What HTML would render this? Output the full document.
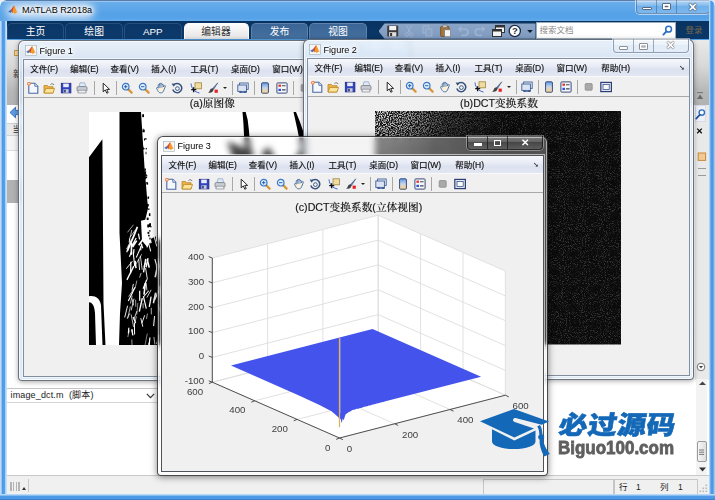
<!DOCTYPE html>
<html lang="zh"><head><meta charset="utf-8"><title>MATLAB R2018a</title>
<style>
*{box-sizing:border-box;margin:0;padding:0}
html,body{width:715px;height:500px;overflow:hidden}
body{position:relative;font-family:"Liberation Sans","Noto Sans CJK SC",sans-serif;font-size:9px;color:#111;
 background:#55a2e8}
i,em,u,b{font-style:normal;font-weight:normal;text-decoration:none}
.abs{position:absolute}
/* main frame */
#frameL{position:absolute;left:0;top:21px;width:6.5px;height:479px;background:linear-gradient(90deg,#c4def7 0,#b4d6f6 1.2px,#4f9ae8 2.2px,#55a0ea 4.6px,#a9cff4 5.4px,#c9e1f8 6.5px)}
#frameR{position:absolute;left:709px;top:0;width:6px;height:500px;background:linear-gradient(90deg,#b9daf8 0,#a6cff5 1px,#4f9ae8 1.8px,#4a98e8 4.2px,#a0ccf4 5px,#9cc6ee 6px)}
#frameB{position:absolute;left:0;top:493.5px;width:715px;height:6.5px;background:linear-gradient(180deg,#c4def7 0,#a9d0f5 1.2px,#4f9ae8 2px,#4a98e8 4.8px,#3a7cc8 5.6px,#2f68b0 6.5px)}
#ttl{position:absolute;left:22px;top:4px;font-size:9.1px;line-height:12px;color:#000;white-space:nowrap;text-shadow:0 0 5px #fff,0 0 5px #fff,0 0 3px #fff}
#topedge{position:absolute;left:0;top:0;width:715px;height:2.4px;background:linear-gradient(180deg,#4a6c98 0,#5f88b8 40%,#9cc6ee 75%,rgba(140,190,240,0))}
#tblur{position:absolute;left:6px;top:2.5px;width:88px;height:16px;border-radius:8px;background:#d3e3f4;filter:blur(4.5px)}
#cornL{position:absolute;left:0;top:0;width:6px;height:6px;background:radial-gradient(circle at 6px 6px,rgba(255,255,255,0) 5.2px,#e6eef6 6px)}
#cornR{position:absolute;right:0;top:0;width:6px;height:6px;background:radial-gradient(circle at 0 6px,rgba(255,255,255,0) 5.2px,#d5e6f6 6px)}
#tglow{position:absolute;left:0;top:2px;width:715px;height:20px;background:linear-gradient(180deg,rgba(255,255,255,.12),rgba(255,255,255,.03) 45%,rgba(255,255,255,0) 55%,rgba(255,255,255,0) 80%,rgba(255,255,255,.12))}
.mlogo{position:absolute}
/* main window buttons */
#mwb{position:absolute;left:635.5px;top:-1px;width:74px;height:14.5px;border:1px solid rgba(60,90,130,.55);border-top:0;border-radius:0 0 4px 4px;background:linear-gradient(180deg,rgba(255,255,255,.55),rgba(255,255,255,.25) 45%,rgba(160,200,240,.2) 50%,rgba(200,225,250,.35));box-shadow:0 0 0 1px rgba(255,255,255,.55)}
#mwb i{position:absolute;top:0;height:13.5px;border-right:1px solid rgba(60,90,130,.5)}
#mwb u{position:absolute;background:#fff;border:1px solid #5a6a80;border-radius:1px}
#mwb b{position:absolute;left:40px;top:1.5px;width:32px;text-align:center;font-size:10.5px;line-height:12px;font-weight:bold;color:#fff;text-shadow:0 0 1px #456,0 0 1px #456,0 0 1px #456,0 0 1.5px #456}
/* tab strip */
#tabs{position:absolute;left:6.5px;top:21.3px;width:702.5px;height:18.2px;background:linear-gradient(180deg,#083260,#0b3869)}
.tab{position:absolute;top:2.2px;height:16px;width:57.5px;border-radius:5px 5px 0 0;color:#fff;font-size:9.8px;line-height:16px;text-align:center;border:1px solid #27507f;border-bottom:0;background:linear-gradient(180deg,#0a3666,#0d3b6d)}
.tab.lt{background:linear-gradient(180deg,#3a6596,#44709f);border-color:#5d82ad}
.tab.sel{background:linear-gradient(180deg,#fdfdfd,#e4e4e4);color:#333;border-color:#fff}
#qat{position:absolute;left:372px;top:2.2px;width:157px;height:15.3px;background:linear-gradient(180deg,#8ba5c7,#7f9bc0);clip-path:polygon(6px 0,100% 0,100% 100%,6px 100%,0 50%)}
#srch{position:absolute;left:529px;top:.7px;width:140.5px;height:16.8px;background:#fff;border:1px solid #9ab;font-size:8.5px;line-height:15px;color:#8a8a8a;padding-left:3px}
#login{position:absolute;left:679px;top:3px;font-size:8.5px;line-height:13px;color:#7a6748}
/* toolstrip & below */
#tstrip{position:absolute;left:6.5px;top:39.5px;width:702.5px;height:65px;background:linear-gradient(180deg,#eaeaea,#d8d8d8 40%,#b6b6b6 80%,#b2b2b2)}
#below{position:absolute;left:6.5px;top:104.5px;width:702.5px;height:389px;background:#fff}
/* figure windows */
.fw{position:absolute;width:391px;height:340.5px;border-radius:6px 6px 4px 4px;border:1px solid rgba(60,66,76,.72);
 background:linear-gradient(180deg,rgba(232,242,253,.82) 0,rgba(214,230,248,.8) 20px,rgba(208,226,246,.72) 100%);
 -webkit-backdrop-filter:blur(2.5px);backdrop-filter:blur(2.5px);
 box-shadow:inset 0 0 0 1px rgba(255,255,255,.75),0 1px 5px rgba(0,0,0,.35)}
.fw.f3{-webkit-backdrop-filter:blur(3px);backdrop-filter:blur(3px);background:linear-gradient(180deg,rgba(255,255,255,.27),rgba(255,255,255,.2));border-color:rgba(30,30,30,.8);box-shadow:inset 0 0 0 1px rgba(255,255,255,.5),0 1px 7px rgba(0,0,0,.5)}
.fwt{position:absolute;left:0;top:0;width:100%;height:20px}
.fwt .mlogo{left:4.8px;top:4px;width:12px;height:11px}
.fwt b{position:absolute;left:19.5px;top:3.5px;font-size:9.1px;line-height:12px;white-space:nowrap;color:#000;text-shadow:0 0 4px #fff,0 0 4px #fff,0 0 3px #fff,0 0 6px #fff}
.wb{position:absolute;right:4.5px;top:-1px;width:76px;height:14px;border:1px solid rgba(110,130,160,.75);border-top:0;border-radius:0 0 4px 4px;
 background:linear-gradient(180deg,rgba(255,255,255,.6),rgba(255,255,255,.3) 45%,rgba(220,232,245,.2) 50%,rgba(235,242,250,.4));box-shadow:0 0 0 1px rgba(255,255,255,.5)}
.wb i{position:absolute;top:0;height:13px;color:#fff}
.wb .b1{left:0;width:20px;border-right:1px solid rgba(110,130,160,.65)}
.wb .b2{left:20px;width:20px;border-right:1px solid rgba(110,130,160,.65)}
.wb .b3{left:40px;width:34px;font-size:10.5px;line-height:13px;text-align:center;font-weight:bold;color:#fff;text-shadow:0 0 1px #777,0 0 1px #777,0 0 1px #777,0 0 1.5px #888}
.wb .b1 u{position:absolute;left:5.5px;top:7px;width:9px;height:3.6px;background:#fff;border:1px solid #8a8f98;border-radius:1px}
.wb .b2 u{position:absolute;left:5px;top:3.5px;width:9px;height:7px;border:1px solid #8a8f98;background:#dfeaf6;box-shadow:inset 0 0 0 1.4px #fff,inset 0 0 0 2.3px #8a8f98;border-radius:1px}
.f3 .wb{border-color:rgba(20,20,20,.8);background:linear-gradient(180deg,rgba(255,255,255,.28),rgba(255,255,255,.1) 45%,rgba(0,0,0,.12) 50%,rgba(255,255,255,.08));box-shadow:0 0 0 1px rgba(255,255,255,.35)}
.f3 .wb .b1,.f3 .wb .b2{border-right-color:rgba(20,20,20,.7)}
.fin{position:absolute;left:3.2px;top:18px;width:382.8px;height:317.5px;border:1px solid rgba(110,124,142,.85);background:#f0f0f0;box-shadow:0 0 0 1px rgba(255,255,255,.6)}
.mb{position:absolute;left:0;top:0;width:100%;height:18px;background:linear-gradient(180deg,#f7f8fc,#e9ecf6 40%,#dde2f0 60%,#e2e6f2);font-size:8.5px;line-height:18px;white-space:nowrap;border-bottom:1px solid #f8f9fc}
.mb span{position:absolute;top:0;color:#0c0c0c;-webkit-text-stroke:.18px #222}
.mb em{position:absolute;right:4px;top:0;font-size:7px;color:#111}
.tb{position:absolute;left:0;top:18px;width:100%;height:19.5px;background:#f0f0f0;border-bottom:1px solid #a9a9a9}
.tb .ic{position:absolute;margin-left:-5.5px;margin-top:-38px}
.tb .sep{position:absolute;top:3px;height:14px;width:1px;background:#a8a8a8;margin-left:-5.5px}
.tb .dd{position:absolute;top:9px;margin-left:-5.5px;border:2px solid transparent;border-top:2.5px solid #222;width:0;height:0}
.cv{position:absolute;left:0;top:37.5px;width:380.8px;height:278px;background:#f0f0f0;overflow:hidden}
.cv .img{position:absolute}
.pt{position:absolute;text-align:center;font-family:"Liberation Sans","Noto Serif CJK SC",serif;font-size:10.7px;line-height:13px;color:#161616;font-weight:500;-webkit-text-stroke:.15px #222}
/* bottom stuff */
#ddl{position:absolute;left:6.5px;top:388px;width:150px;height:15px;background:#fff;border-top:1px solid #c4c4c4;border-bottom:1px solid #d4d4d4;font-size:9px;line-height:13px;padding-left:4px;color:#222;white-space:nowrap;letter-spacing:.15px}
#ddl svg{position:absolute;left:139.5px;top:4px}
#status{position:absolute;left:6.5px;top:475.3px;width:702.5px;height:18.5px;background:#f0f0f0;border-top:1px solid #c9c9c9;font-size:8.5px;color:#222}
#status .fld{position:absolute;top:3px;height:15px;border:1px solid #c6c6c6;border-bottom:0;background:#f0f0f0}
#grip{position:absolute;left:3px;top:5.5px;width:11px;height:9.5px;background:repeating-linear-gradient(90deg,#b4b4b4 0,#b4b4b4 1.5px,#f0f0f0 1.5px,#f0f0f0 2.8px)}
#vsb{position:absolute;left:696px;top:379px;width:11px;height:96px;background:#f3f3f3}
#vsb .th{position:absolute;left:.5px;top:62px;width:10px;height:21px;border:1px solid #9a9a9a;border-radius:2px;background:linear-gradient(90deg,#f6f6f6,#dedede)}
#rside{position:absolute;left:694.5px;top:104.5px;width:14.5px;height:275px;background:#e9e9e9}
#wm{position:absolute;left:556px;top:408px;white-space:nowrap}
#wm .cn{position:absolute;left:.5px;top:2.5px;font-family:"Liberation Sans","Noto Sans CJK SC",sans-serif;font-weight:900;font-size:25.5px;line-height:28px;color:#1468b8;transform:skewX(-8deg) scaleX(1.13);transform-origin:0 100%;letter-spacing:.4px;-webkit-text-stroke:.6px #1468b8}
#wm .en{position:absolute;left:1.5px;top:30.5px;font-family:"Liberation Sans",sans-serif;font-weight:bold;font-size:18px;line-height:18px;color:#5f5f5f;letter-spacing:0;-webkit-text-stroke:.8px #5f5f5f;transform:scaleX(.943);transform-origin:0 0}

.f3 .wb .b1 u{border:0;background:#fff;left:6.5px;top:7.8px;width:8px;height:2.4px;border-radius:0}
.f3 .wb .b2 u{border:1.5px solid #fff;background:transparent;box-shadow:none;left:6px;top:4.5px;width:7.5px;height:5.5px;border-radius:0}
.f3 .wb .b3{font-size:9.5px;line-height:13.500px;text-shadow:none}

.f1{width:392px}
.f1 .fin{left:4px}
.f1 .fwt .mlogo{left:5.6px}
.f1 .fwt b{left:20.5px}
.f3 .fin{border-color:rgba(60,64,72,.9)}

</style></head>
<body>
<div id="tglow"></div><div id="tblur"></div><div id="topedge"></div><div id="cornL"></div>
<div style="position:absolute;left:7px;top:3.5px;width:12px;height:12px"><svg class="mlogo" width="12" height="12" viewBox="0 0 12 12" preserveAspectRatio="none"><path d="M1.2 7.4l2.6-1.6 1.4 1.2-1.8 1.9z" fill="#3d6fc0"/><path d="M3.8 5.8c1.4-1.3 2.2-3.4 3.4-4.4l1.2 5.4-3.2 2.2z" fill="#d8442a"/><path d="M7.2 1.4c1.2 1.6 2.2 5.6 3.6 7.4-1.4-.6-2-.2-2.8 1.4-.8-1-1.6-2-2.8-1.6z" fill="#f29a2e"/></svg></div>
<div id="ttl">MATLAB R2018a</div>
<div id="mwb"><i style="left:0;width:20px"></i><i style="left:20px;width:20px"></i><u style="left:5.5px;top:7.5px;width:9.5px;height:3.6px"></u><u style="left:25px;top:3.5px;width:9.5px;height:7.6px;box-shadow:inset 0 0 0 1.7px #fff,inset 0 0 0 2.7px #5a6a80"></u><b>✕</b></div>
<div id="tabs">
<div class="tab" style="left:0.3px">主页</div><div class="tab" style="left:58.9px">绘图</div><div class="tab" style="left:117.6px">APP</div>
<div class="tab sel" style="left:177px;width:65px">编辑器</div><div class="tab lt" style="left:244.3px">发布</div><div class="tab lt" style="left:302.7px">视图</div>
<div id="qat"></div>
<svg style="position:absolute;left:378.5px;top:2.5px" width="152" height="15" viewBox="0 0 152 15">
<g transform="translate(7.7,7)"><rect x="-5.5" y="-5.5" width="11" height="11" rx="1" fill="#3c3c3c"/><rect x="-3.5" y="-5" width="7" height="4.2" fill="#f2f2f2"/><rect x="-3.6" y="1.2" width="7.2" height="4.3" fill="#e0e0e0"/><rect x="-2.6" y="2" width="2" height="3" fill="#333"/></g>
<g transform="translate(24,7)" stroke="#9db3d2" fill="none" stroke-width="1"><path d="M2.5 -5.5L-1.5 2M-2.5 -5.5L1.5 2"/><circle cx="-2.3" cy="3.6" r="1.7"/><circle cx="2.3" cy="3.6" r="1.7"/></g>
<g transform="translate(42.4,7)" stroke="#9db3d2" fill="#8aa3c6" stroke-width="1"><rect x="-4.5" y="-5" width="6" height="7"/><rect x="-1.5" y="-2" width="6" height="7"/></g>
<g transform="translate(60.6,7)"><rect x="-5" y="-4.5" width="8.5" height="10" rx="1" fill="#a5743a" stroke="#6e4c22" stroke-width=".8"/><rect x="-3" y="-6" width="4.5" height="2.6" rx=".8" fill="#c9c9c9" stroke="#666" stroke-width=".6"/><rect x="-1" y="-1.2" width="6" height="7" fill="#f4f4f4" stroke="#777" stroke-width=".7"/></g>
<g transform="translate(78.2,7)" stroke="#9db3d2" fill="none" stroke-width="1.7"><path d="M-3.5 -2H1.5a3.2 3.2 0 0 1 0 6.4H-2"/><path d="M-1.8 -5.2L-5.4 -2l3.6 3.2z" fill="#9db3d2" stroke="none"/></g>
<g transform="translate(95,7)" stroke="#9db3d2" fill="none" stroke-width="1.7"><path d="M3.5 -2H-1.5a3.2 3.2 0 0 0 0 6.4H2"/><path d="M1.8 -5.2L5.4 -2l-3.6 3.2z" fill="#9db3d2" stroke="none"/></g>
<g transform="translate(113.5,7)"><rect x="-3" y="-5.5" width="9" height="7" fill="#f4f4f4" stroke="#333" stroke-width="1"/><rect x="-3" y="-5.5" width="9" height="2" fill="#333"/><rect x="-6" y="-1.5" width="9" height="7" fill="#f4f4f4" stroke="#333" stroke-width="1"/><rect x="-6" y="-1.5" width="9" height="2" fill="#333"/></g>
<g transform="translate(129.8,7)"><circle r="5.6" fill="#fff" stroke="#1c2c44" stroke-width="1.3"/><text x="0" y="3.3" font-family="Liberation Sans,sans-serif" font-weight="bold" font-size="9.5" text-anchor="middle" fill="#1c2c44">?</text></g>
<path d="M142.2 6l2.8 3 2.8-3z" fill="#0c1a30"/>
</svg>
<div id="srch">搜索文档<svg style="position:absolute;right:2px;top:2px" width="11" height="11" viewBox="0 0 11 11"><circle cx="6.6" cy="4.2" r="2.9" fill="#fff" stroke="#2a6fc4" stroke-width="1.5"/><path d="M4.4 6.4L1.4 9.6" stroke="#2a6fc4" stroke-width="1.9" stroke-linecap="round"/></svg></div>
<div id="login">登录</div>
</div>
<div id="tstrip"></div>
<div id="below"></div>
<div style="position:absolute;left:13.5px;top:49.5px;width:6px;height:6px;background:#f4d9a0;border:1px solid #c79a48"></div>
<div style="position:absolute;left:13px;top:69px;font-size:9px;line-height:11px;color:#333">新</div>
<svg style="position:absolute;left:8.5px;top:105.5px" width="13" height="13" viewBox="0 0 13 13"><path d="M1 6.5L6.5 1.200V4.400H12V8.600H6.500V11.800z" fill="#5b9be0" stroke="#2f6bb8" stroke-width=".9" stroke-linejoin="round"/></svg>
<div style="position:absolute;left:6.5px;top:123px;width:14px;height:12.5px;background:#e9e9e9;border-top:1px solid #d0d0d0;border-bottom:1px solid #d0d0d0;font-size:8.5px;line-height:11px;color:#333;padding-left:6px;overflow:hidden;white-space:nowrap">当前</div>
<div style="position:absolute;left:6.5px;top:135.500px;width:14px;height:15.5px;background:#f4f4f4;border-bottom:1px solid #dcdcdc"></div>
<div style="position:absolute;left:6.5px;top:180px;width:14px;height:23px;background:#b2b2b2"></div>
<div id="rside">
<div style="position:absolute;left:0;top:0;width:11.5px;height:17px;background:#eef0fa;border:1px solid #d8dae4"></div>
<svg style="position:absolute;left:0;top:-15px" width="15" height="80" viewBox="0 0 15 80">
<path d="M2.3 2.6h5.6" stroke="#777" stroke-width="1.1"/><path d="M5.1 4.4L2 9h6.2z" fill="#6c6c6c"/>
<circle cx="6.8" cy="22.6" r="2.7" fill="#fff" stroke="#2a6fc4" stroke-width="1.4"/><path d="M4.7 24.9L1.2 28.6" stroke="#1f4f9c" stroke-width="1.7" stroke-linecap="round"/>
<path d="M2.2 38.6l4.6 4.6M6.8 38.6l-4.6 4.6" stroke="#111" stroke-width="1.3"/>
<rect x="3.2" y="63" width="7.4" height="7.4" fill="#f2c894" stroke="#c88a3a" stroke-width="1"/>
</svg>
<div style="position:absolute;left:3px;top:63.5px;width:8px;height:1px;background:#9a9a9a"></div>
<div style="position:absolute;left:3px;top:70.5px;width:8px;height:1px;background:#9a9a9a"></div>
<svg style="position:absolute;left:1px;top:257px" width="10" height="10" viewBox="0 0 10 10"><circle cx="5" cy="5" r="3.8" fill="#fafafa" stroke="#666" stroke-width=".9"/><path d="M3 4l2 2.4L7 4z" fill="#444"/></svg>
</div>
<div id="vsb"><svg style="position:absolute;left:2.5px;top:2px" width="7" height="5" viewBox="0 0 7 5"><path d="M0 4L3.5 .5 7 4z" fill="#444"/></svg><div class="th"><svg style="position:absolute;left:1.5px;top:6.5px" width="6" height="8" viewBox="0 0 6 8"><path d="M0 1h5M0 3.2h5M0 5.4h5" stroke="#777" stroke-width="1"/></svg></div><svg style="position:absolute;left:2.5px;top:87.5px" width="7" height="5" viewBox="0 0 7 5"><path d="M0 .5L3.5 4.5 7 .5z" fill="#333"/></svg></div>
<div id="ddl">image_dct.m&nbsp; (脚本)<svg width="9" height="6" viewBox="0 0 9 6"><path d="M.8 .8L4.5 4.6 8.2 .8" fill="none" stroke="#333" stroke-width="1.2"/></svg></div>
<div id="status"><div id="grip"></div><svg style="position:absolute;left:15.5px;top:10.5px" width="4" height="3" viewBox="0 0 4 3"><path d="M0 3L2 0 4 3z" fill="#333"/></svg><div style="position:absolute;left:21px;top:3px;width:1px;height:13px;background:#c9c9c9"></div>
<div class="fld" style="left:476.5px;width:131px"></div><div class="fld" style="left:607.5px;width:84px"></div>
<span style="position:absolute;left:612.5px;top:5.5px;line-height:11px">行</span><span style="position:absolute;left:629.5px;top:5.5px;line-height:11px">1</span><span style="position:absolute;left:653.5px;top:5.5px;line-height:11px">列</span><span style="position:absolute;left:671.5px;top:5.5px;line-height:11px">1</span>
<svg style="position:absolute;left:692px;top:8px" width="9" height="9" viewBox="0 0 9 9"><g fill="#b9b9b9"><rect x="6.5" y="0.5" width="1.6" height="1.6"/><rect x="6.5" y="3.5" width="1.6" height="1.6"/><rect x="6.5" y="6.5" width="1.6" height="1.6"/><rect x="3.5" y="3.5" width="1.6" height="1.6"/><rect x="3.5" y="6.5" width="1.6" height="1.6"/><rect x=".5" y="6.5" width="1.6" height="1.6"/></g></svg>
</div>
<div id="frameL"></div><div id="frameR"></div><div id="frameB"></div><div id="cornR"></div>
<div class="fw f1" style="left:18px;top:40px">
<div class="fwt"><svg class="mlogo" width="12" height="12" viewBox="0 0 12 12" preserveAspectRatio="none"><rect x=".4" y=".4" width="11.2" height="11.2" fill="#f6f6f6" stroke="#9aa" stroke-width=".6"/><path d="M1.2 7.4l2.6-1.6 1.4 1.2-1.8 1.9z" fill="#3d6fc0"/><path d="M3.8 5.8c1.4-1.3 2.2-3.4 3.4-4.4l1.2 5.4-3.2 2.2z" fill="#d8442a"/><path d="M7.2 1.4c1.2 1.6 2.2 5.6 3.6 7.4-1.4-.6-2-.2-2.8 1.4-.8-1-1.6-2-2.8-1.6z" fill="#f29a2e"/></svg><b>Figure 1</b></div>
<div class="wb"><i class="b1"><u></u></i><i class="b2"><u></u></i><i class="b3">✕</i></div>
<div class="fin">
<div class="mb"><span style="left:6.199999999999999px">文件(F)</span><span style="left:46.3px">编辑(E)</span><span style="left:86.6px">查看(V)</span><span style="left:127.19999999999999px">插入(I)</span><span style="left:166.4px">工具(T)</span><span style="left:207px">桌面(D)</span><span style="left:248.2px">窗口(W)</span><span style="left:293px">帮助(H)</span><em>➘</em></div>
<div class="tb"><svg class="ic" style="left:8.0px;top:42.0px" width="12" height="12" viewBox="0 0 12 12"><path d="M1.8 1.3h6l3 3v7h-9z" fill="#f4f8fd" stroke="#4a68a4" stroke-width="1.1"/><path d="M7.8 1.300v3h3" fill="#d4e0f2" stroke="#4a68a4" stroke-width=".8"/><circle cx="1.9" cy="1.7" r="1.5" fill="#fbe3c0" stroke="#ee6a2a" stroke-width=".9"/></svg><svg class="ic" style="left:24.3px;top:42.0px" width="12" height="12" viewBox="0 0 12 12"><path d="M1 3.5h3.5l1 1.2h4.500v6.300h-9z" fill="#eeb44a" stroke="#b98622" stroke-width=".8"/><path d="M1 11l1.8-4.6h8.8L10 11z" fill="#fbe39a" stroke="#b98622" stroke-width=".8"/><path d="M7.5 2.5c1.5-1.2 3-.8 3.5.6" stroke="#555" fill="none" stroke-width=".8"/></svg><svg class="ic" style="left:41.0px;top:42.0px" width="12" height="12" viewBox="0 0 12 12"><rect x="1.3" y="1.3" width="9.6" height="9.6" fill="#3044c0" stroke="#1c2a80" stroke-width=".8"/><rect x="3.2" y="1.6" width="5.6" height="3.6" fill="#e8ecf8"/><rect x="3.4" y="7.2" width="5.2" height="3.6" fill="#c8cbd8"/><rect x="4.2" y="7.8" width="1.5" height="2.6" fill="#222a70"/></svg><svg class="ic" style="left:57.8px;top:42.0px" width="12" height="12" viewBox="0 0 12 12"><path d="M4 .8h4.6l1.200 4H3z" fill="#dfeaf8" stroke="#8aa0c0" stroke-width=".7"/><rect x="1" y="4.6" width="10" height="4.6" rx="1.2" fill="#c9ccd2" stroke="#777c86" stroke-width=".8"/><path d="M2.6 8.2h6.8l.8 2.8H1.8z" fill="#eceef2" stroke="#888d96" stroke-width=".7"/></svg><i class="sep" style="left:75.0px"></i><svg class="ic" style="left:81.3px;top:42.0px" width="12" height="12" viewBox="0 0 12 12"><path d="M3.2 1.2v8.6l2.1-1.9 1.5 3.3 1.4-.6-1.5-3.2h2.9z" fill="#fff" stroke="#111" stroke-width=".9" stroke-linejoin="round"/></svg><i class="sep" style="left:97.4px"></i><svg class="ic" style="left:102.6px;top:42.0px" width="12" height="12" viewBox="0 0 12 12"><path d="M6.6 6.6l4 4" stroke="#d8963a" stroke-width="2.2" stroke-linecap="round"/><circle cx="4.7" cy="4.7" r="3.3" fill="#dff0fb" stroke="#3c78c8" stroke-width="1.2"/><path d="M3 4.7h3.4M4.7 3v3.4" stroke="#2a60b0" stroke-width="1"/></svg><svg class="ic" style="left:119.6px;top:42.0px" width="12" height="12" viewBox="0 0 12 12"><path d="M6.6 6.6l4 4" stroke="#d8963a" stroke-width="2.2" stroke-linecap="round"/><circle cx="4.7" cy="4.7" r="3.3" fill="#dff0fb" stroke="#3c78c8" stroke-width="1.2"/><path d="M3 4.7h3.4" stroke="#2a60b0" stroke-width="1"/></svg><svg class="ic" style="left:136.3px;top:42.0px" width="13" height="12" viewBox="0 0 13 12"><path d="M3.2 6.2V3.2c0-.9 1.2-.9 1.2 0V1.9c0-.9 1.3-.9 1.3 0v.2c0-.9 1.3-.9 1.3 0v.8c0-.9 1.3-.8 1.3.1v2l1-1.2c.6-.7 1.5 0 1 .8L8.8 8.2c-.5 1.5-1.2 2.6-2.6 2.6H5.4c-1.3 0-2-.9-2.6-2.1L1.6 6.5c-.4-.9.7-1.4 1.2-.7z" fill="#fdf1dc" stroke="#3a6aa8" stroke-width=".9" stroke-linejoin="round"/><path d="M4.400 3.200v2.800M5.700 2.200v3.600M7 2.800v3" stroke="#3a6aa8" stroke-width=".6"/></svg><svg class="ic" style="left:152.4px;top:42.0px" width="12" height="12" viewBox="0 0 12 12"><path d="M2.6 3.2A4.6 4.6 0 1 1 1.8 7.6" fill="none" stroke="#34507c" stroke-width="1.5"/><path d="M.6 1.4l3.6.4-1.6 3z" fill="#34507c"/><circle cx="6.400" cy="6.600" r="1.900" fill="#eef2f8" stroke="#34507c" stroke-width=".9"/></svg><svg class="ic" style="left:171.0px;top:42.0px" width="12" height="12" viewBox="0 0 12 12"><rect x="5" y=".8" width="6.4" height="6" fill="#f0dca0" stroke="#a08440" stroke-width=".8"/><path d="M1 1.5c.6 5.5 3.5 8.4 8.5 9.5" stroke="#2a50c8" fill="none" stroke-width=".9"/><path d="M3.6 5.2v5M1.2 7.7h5" stroke="#111" stroke-width="1.3"/></svg><svg class="ic" style="left:188.6px;top:42.0px" width="12" height="12" viewBox="0 0 12 12"><path d="M10.8.8L5.6 6.4l1 1z" fill="#5a7cc0" stroke="#34507c" stroke-width=".6"/><path d="M5.6 6.2c-1.6 0-2.6 1-2.9 2.6-.2.9-.8 1.4-1.7 1.6 2.4.9 5.2.1 5.6-3.2z" fill="#444" /><rect x="7.6" y="7.6" width="3.2" height="3.2" fill="#e8202a"/></svg><i class="dd" style="left:204px"></i><i class="sep" style="left:213.0px"></i><svg class="ic" style="left:218.0px;top:42.0px" width="12" height="12" viewBox="0 0 12 12"><rect x="2.6" y="1" width="8.6" height="6.4" fill="#e9eef7" stroke="#3c5e98" stroke-width=".9"/><rect x=".8" y="3" width="8.6" height="6.4" fill="#dbe4f2" stroke="#3c5e98" stroke-width=".9"/><path d="M3 10h2.2M6.6 10h2.4" stroke="#3c5e98" stroke-width="1.8" stroke-linecap="round"/><path d="M4.6 10h2.6" stroke="#7c92b8" stroke-width="1"/></svg><i class="sep" style="left:235.7px"></i><svg class="ic" style="left:240.8px;top:42.0px" width="12" height="12" viewBox="0 0 12 12"><defs><linearGradient id="cbg" x1="0" y1="0" x2="0" y2="1"><stop offset="0" stop-color="#5d9bea"/><stop offset=".5" stop-color="#c9d6e8"/><stop offset="1" stop-color="#fbd384"/></linearGradient></defs><rect x="2.6" y=".8" width="6.8" height="10.4" rx=".8" fill="url(#cbg)" stroke="#3a4c78" stroke-width="1"/></svg><svg class="ic" style="left:257.0px;top:42.0px" width="12" height="12" viewBox="0 0 12 12"><rect x=".9" y=".9" width="10.2" height="10.2" rx=".8" fill="#f4f6fb" stroke="#3a4c78" stroke-width="1"/><rect x="2.4" y="2.6" width="2.6" height="2.2" fill="#e8352a"/><rect x="2.4" y="6.8" width="2.6" height="2.2" fill="#2a55d8"/><path d="M6 3.7h3.6M6 7.9h3.6" stroke="#445" stroke-width="1.1"/></svg><i class="sep" style="left:274.5px"></i><svg class="ic" style="left:280.0px;top:42.0px" width="12" height="12" viewBox="0 0 12 12"><rect x="2.2" y="2.6" width="7" height="6.6" rx=".8" fill="#a9a9a9" stroke="#8c8c8c" stroke-width=".8"/></svg><svg class="ic" style="left:297.0px;top:42.0px" width="12" height="12" viewBox="0 0 12 12"><rect x=".8" y="1.4" width="10.6" height="9.2" fill="#dfe6f3" stroke="#2c3e74" stroke-width="1.2"/><rect x="3" y="3.4" width="6.2" height="5.2" fill="#f6f8fc" stroke="#2c3e74" stroke-width=".7"/></svg></div>
<div class="cv"><div class="pt" style="left:0;width:376.6px;top:-1px">(a)原图像</div><svg class="img" style="left:65.4px;top:14px" width="246" height="233.5" preserveAspectRatio="none" viewBox="0 0 246 232"><rect width="246" height="232" fill="#000"/><path d="M0 0H30.5V120L33 170 31 200 30 232H16.5L14.5 190 13.4 27 0 45z" fill="#fff"/><path d="M0 183C6 182 11 185 12 192L13.5 232H7L6 200C5.5 192 3 189 0 189z" fill="#fff"/><path d="M52 0H246V232H150L140 127 70 127 66 118 62 114 56 108 59 96 58.3 88 55.5 55z" fill="#fff"/><path d="M45.0 136.3l-0.5 4.7" stroke="#fff" stroke-width="1.2"/><path d="M42.3 139.4l-1.9 4.4" stroke="#fff" stroke-width="1.1"/><path d="M42.8 117.2l-2.8 12.3" stroke="#fff" stroke-width="0.7"/><path d="M59.2 128.7l2.5 9.8" stroke="#fff" stroke-width="1.0"/><path d="M42.9 185.2l1.6 6.9" stroke="#fff" stroke-width="0.8"/><path d="M49.4 120.8l1.2 5.8" stroke="#fff" stroke-width="1.2"/><path d="M52.1 159.9l-1.5 4.6" stroke="#fff" stroke-width="0.7"/><path d="M60.7 127.4l-2.7 7.1" stroke="#fff" stroke-width="1.2"/><path d="M49.7 146.0l0.9 11.0" stroke="#fff" stroke-width="0.9"/><path d="M56.6 155.1l1.8 11.3" stroke="#fff" stroke-width="0.9"/><path d="M45.0 185.5l-2.8 11.6" stroke="#fff" stroke-width="0.8"/><path d="M41.9 148.7l-0.3 11.6" stroke="#fff" stroke-width="1.2"/><path d="M50.7 177.7l-0.0 9.9" stroke="#fff" stroke-width="1.2"/><path d="M65.9 146.2l2.4 8.7" stroke="#fff" stroke-width="1.3"/><path d="M61.1 116.6l-0.5 13.9" stroke="#fff" stroke-width="1.5"/><path d="M52.0 133.3l-0.3 4.2" stroke="#fff" stroke-width="1.1"/><path d="M43.8 124.6l-6.4 11.7" stroke="#fff" stroke-width="0.7"/><path d="M52.1 130.6l1.7 4.8" stroke="#fff" stroke-width="1.1"/><path d="M67.3 153.2l1.2 12.6" stroke="#fff" stroke-width="0.9"/><path d="M51.4 143.1l1.8 13.6" stroke="#fff" stroke-width="0.8"/><path d="M47.2 125.2l-4.7 8.8" stroke="#fff" stroke-width="1.2"/><path d="M40.5 131.7l-2.8 7.7" stroke="#fff" stroke-width="1.2"/><path d="M62.1 183.5l-1.8 10.2" stroke="#fff" stroke-width="1.3"/><path d="M67.1 116.0l0.8 12.7" stroke="#fff" stroke-width="1.5"/><path d="M52.6 141.4l-6.0 10.3" stroke="#fff" stroke-width="0.7"/><path d="M46.4 117.1l-5.4 7.4" stroke="#fff" stroke-width="0.7"/><path d="M44.5 112.0l-6.0 7.6" stroke="#fff" stroke-width="0.6"/><path d="M59.7 177.6l-5.5 6.5" stroke="#fff" stroke-width="1.0"/><path d="M44.2 139.3l1.5 13.9" stroke="#fff" stroke-width="1.1"/><path d="M43.3 148.3l-6.0 7.4" stroke="#fff" stroke-width="0.9"/><path d="M46.1 174.2l-6.8 13.5" stroke="#fff" stroke-width="1.2"/><path d="M56.5 123.0l-6.7 9.3" stroke="#fff" stroke-width="1.7"/><path d="M62.2 176.7l-4.4 7.7" stroke="#fff" stroke-width="0.8"/><path d="M57.1 169.9l0.8 7.3" stroke="#fff" stroke-width="0.8"/><path d="M70.8 172.9l1.5 12.1" stroke="#fff" stroke-width="1.5"/><path d="M47.9 167.5l-1.8 7.6" stroke="#fff" stroke-width="0.6"/><path d="M48.4 114.1l-4.4 10.9" stroke="#fff" stroke-width="1.7"/><path d="M68.8 145.5l2.9 13.6" stroke="#fff" stroke-width="1.0"/><path d="M47.1 128.5l-5.0 6.0" stroke="#fff" stroke-width="1.3"/><path d="M66.6 179.5l-2.2 10.5" stroke="#fff" stroke-width="1.5"/><path d="M59.9 118.4l2.1 11.8" stroke="#fff" stroke-width="1.4"/><path d="M46.1 147.9l0.9 7.3" stroke="#fff" stroke-width="1.5"/><path d="M53.3 184.9l-3.0 13.5" stroke="#fff" stroke-width="1.4"/><path d="M44.1 124.8l-5.5 13.0" stroke="#fff" stroke-width="1.5"/><path d="M65.0 123.0l2.8 10.6" stroke="#fff" stroke-width="1.0"/><path d="M44.8 153.1l-6.9 13.7" stroke="#fff" stroke-width="1.3"/><path d="M68.8 151.5l-2.7 12.7" stroke="#fff" stroke-width="1.5"/><path d="M47.9 127.8l-4.1 6.4" stroke="#fff" stroke-width="1.2"/><path d="M53.0 131.5l-5.7 13.1" stroke="#fff" stroke-width="1.0"/><path d="M58.2 146.4l2.0 8.2" stroke="#fff" stroke-width="1.6"/><path d="M56.7 149.6l-1.8 4.2" stroke="#fff" stroke-width="1.1"/><path d="M40.4 125.7l1.0 5.7" stroke="#fff" stroke-width="1.1"/><path d="M57.8 166.4l-3.7 9.2" stroke="#fff" stroke-width="1.2"/><path d="M44.4 170.8l-1.4 6.5" stroke="#fff" stroke-width="0.9"/><path d="M56.4 169.9l-1.4 11.6" stroke="#fff" stroke-width="1.6"/><path d="M59.0 145.2l-1.9 9.1" stroke="#fff" stroke-width="1.4"/><path d="M56.7 145.9l-2.2 13.4" stroke="#fff" stroke-width="1.4"/><path d="M69.6 177.7l-4.4 9.6" stroke="#fff" stroke-width="1.6"/><path d="M45.4 175.0l-5.8 8.4" stroke="#fff" stroke-width="0.7"/><path d="M42.6 130.0l-0.3 11.8" stroke="#fff" stroke-width="1.6"/><path d="M42.9 215.8l1.0 6.3" stroke="#fff" stroke-width="1.1"/><path d="M69.0 191.0l2.7 8.6" stroke="#fff" stroke-width="0.8"/><path d="M69.7 221.6l-2.0 8.9" stroke="#fff" stroke-width="0.9"/><path d="M48.9 189.8l-1.1 11.5" stroke="#fff" stroke-width="0.5"/><path d="M55.7 202.0l-2.9 8.0" stroke="#fff" stroke-width="0.9"/><path d="M54.4 183.2l2.9 12.1" stroke="#fff" stroke-width="1.2"/><path d="M41.4 193.3l-2.8 12.0" stroke="#fff" stroke-width="0.7"/><path d="M42.1 201.1l2.5 12.4" stroke="#fff" stroke-width="0.7"/><path d="M42.8 226.0l0.4 11.3" stroke="#fff" stroke-width="0.6"/><path d="M39.8 214.4l-0.4 5.7" stroke="#fff" stroke-width="1.2"/><path d="M58.3 220.1l-2.5 12.7" stroke="#fff" stroke-width="0.5"/><path d="M65.6 202.7l-1.0 10.0" stroke="#fff" stroke-width="1.1"/><path d="M46.6 186.5l0.2 7.1" stroke="#fff" stroke-width="0.6"/><path d="M43.2 182.5l-1.8 7.8" stroke="#fff" stroke-width="0.7"/><path d="M62.3 194.5l0.0 6.6" stroke="#fff" stroke-width="0.7"/><path d="M38.6 192.5l-2.9 11.6" stroke="#fff" stroke-width="0.9"/><path d="M44.1 203.7l2.6 6.0" stroke="#fff" stroke-width="1.1"/><path d="M51.8 204.8l2.0 8.5" stroke="#fff" stroke-width="0.9"/><path d="M60.0 229.1l-0.9 12.5" stroke="#fff" stroke-width="1.0"/><path d="M58.4 200.2l-0.9 5.5" stroke="#fff" stroke-width="0.6"/><path d="M40.3 217.0l-1.5 6.5" stroke="#fff" stroke-width="0.6"/><path d="M64.9 223.5l1.0 7.5" stroke="#fff" stroke-width="0.7"/><path d="M47.4 203.0l-2.1 9.0" stroke="#fff" stroke-width="0.7"/><path d="M68.8 228.6l0.3 7.2" stroke="#fff" stroke-width="1.2"/><path d="M47.9 197.8l-3.0 8.4" stroke="#fff" stroke-width="0.8"/><path d="M54.1 190.0l0.0 5.0" stroke="#fff" stroke-width="0.7"/><path d="M40.9 200.0l-2.7 5.2" stroke="#fff" stroke-width="0.7"/><path d="M45.4 209.3l0.2 11.8" stroke="#fff" stroke-width="1.0"/><path d="M60.9 224.0l-0.7 7.9" stroke="#fff" stroke-width="1.2"/><path d="M42.8 216.2l0.9 5.4" stroke="#fff" stroke-width="1.1"/><path d="M52 108l8 -2 10 2 0 14 -8 4 -4 8 -5 -6z" fill="#fff"/><rect x="59.8" y="111.5" width="1.7" height="2.6" fill="#000"/><rect x="54.3" y="17.4" width="1.4" height="2.7" fill="#000"/><rect x="59.9" y="100.6" width="1.5" height="2.8" fill="#000"/><rect x="58.6" y="85.4" width="1.1" height="1.1" fill="#000"/><rect x="53.7" y="16.6" width="0.9" height="2.7" fill="#000"/><rect x="57.5" y="69.8" width="1.6" height="2.4" fill="#000"/><rect x="54.9" y="61.2" width="1.8" height="2.5" fill="#000"/><rect x="56.8" y="62.9" width="1.6" height="1.1" fill="#000"/><rect x="57.4" y="92.1" width="0.9" height="1.5" fill="#000"/><rect x="57.2" y="91.2" width="1.7" height="3.0" fill="#000"/><rect x="56.2" y="61.7" width="1.4" height="2.4" fill="#000"/><rect x="58.9" y="95.9" width="1.6" height="1.2" fill="#000"/><rect x="53.4" y="18.4" width="1.7" height="1.6" fill="#000"/><rect x="55.4" y="71.0" width="0.9" height="1.5" fill="#000"/><rect x="58.5" y="84.0" width="1.6" height="1.6" fill="#000"/><rect x="56.7" y="64.6" width="1.4" height="1.2" fill="#000"/><rect x="58.3" y="111.7" width="2.0" height="2.9" fill="#000"/><rect x="53.2" y="2.2" width="1.8" height="2.9" fill="#000"/><rect x="55.5" y="56.2" width="1.1" height="2.9" fill="#000"/><rect x="55.0" y="26.3" width="1.0" height="2.0" fill="#000"/><rect x="58.5" y="119.1" width="1.8" height="2.0" fill="#000"/><rect x="60.1" y="110.9" width="1.1" height="2.8" fill="#000"/><rect x="54.9" y="60.8" width="0.8" height="2.0" fill="#000"/><rect x="55.7" y="56.3" width="1.0" height="1.7" fill="#000"/><rect x="56.6" y="39.5" width="0.8" height="2.5" fill="#000"/><rect x="57.7" y="104.9" width="1.9" height="2.4" fill="#000"/><rect x="58.7" y="112.7" width="1.2" height="1.8" fill="#000"/><rect x="60.4" y="124.8" width="1.2" height="1.9" fill="#000"/><rect x="53.6" y="34.4" width="0.9" height="2.7" fill="#000"/><rect x="56.7" y="35.7" width="1.1" height="1.5" fill="#000"/><rect x="55.7" y="63.9" width="1.2" height="2.9" fill="#000"/><rect x="60.4" y="110.5" width="1.6" height="2.8" fill="#000"/><rect x="59.9" y="117.6" width="1.7" height="1.1" fill="#000"/><rect x="58.1" y="91.5" width="1.7" height="2.3" fill="#000"/><rect x="53.6" y="35.8" width="1.9" height="1.3" fill="#000"/><rect x="55.9" y="59.0" width="1.2" height="2.5" fill="#000"/><rect x="59.1" y="122.0" width="1.6" height="1.6" fill="#000"/><rect x="56.7" y="69.7" width="1.0" height="1.3" fill="#000"/><rect x="56.1" y="26.0" width="1.4" height="1.4" fill="#000"/><rect x="61.2" y="113.3" width="1.3" height="1.3" fill="#000"/><path d="M153.500 0h3.200l2 8 1.200 10 .8 10 2 12-5 1-2.500-14-.8-16z" fill="#000"/><path d="M204.500 0h2.500l4 10 3.500 10 3 18h-5l-4-20z" fill="#000"/><path d="M138 29l26 10v24h-14z" fill="#000"/><path d="M173.400 39l7 -4 6 12v14h-12z" fill="#000"/><path d="M205 48l11.500 -19 3 18v14h-14z" fill="#000"/></svg></div>
</div></div>
<div class="fw f2" style="left:303px;top:39.3px">
<div class="fwt"><svg class="mlogo" width="12" height="12" viewBox="0 0 12 12" preserveAspectRatio="none"><rect x=".4" y=".4" width="11.2" height="11.2" fill="#f6f6f6" stroke="#9aa" stroke-width=".6"/><path d="M1.2 7.4l2.6-1.6 1.4 1.2-1.8 1.9z" fill="#3d6fc0"/><path d="M3.8 5.8c1.4-1.3 2.2-3.4 3.4-4.4l1.2 5.4-3.2 2.2z" fill="#d8442a"/><path d="M7.2 1.4c1.2 1.6 2.2 5.6 3.6 7.4-1.4-.6-2-.2-2.8 1.4-.8-1-1.6-2-2.8-1.6z" fill="#f29a2e"/></svg><b>Figure 2</b></div>
<div class="wb"><i class="b1"><u></u></i><i class="b2"><u></u></i><i class="b3">✕</i></div>
<div class="fin">
<div class="mb"><span style="left:6.199999999999999px">文件(F)</span><span style="left:46.3px">编辑(E)</span><span style="left:86.6px">查看(V)</span><span style="left:127.19999999999999px">插入(I)</span><span style="left:166.4px">工具(T)</span><span style="left:207px">桌面(D)</span><span style="left:248.2px">窗口(W)</span><span style="left:293px">帮助(H)</span><em>➘</em></div>
<div class="tb"><svg class="ic" style="left:8.0px;top:42.0px" width="12" height="12" viewBox="0 0 12 12"><path d="M1.8 1.3h6l3 3v7h-9z" fill="#f4f8fd" stroke="#4a68a4" stroke-width="1.1"/><path d="M7.8 1.300v3h3" fill="#d4e0f2" stroke="#4a68a4" stroke-width=".8"/><circle cx="1.9" cy="1.7" r="1.5" fill="#fbe3c0" stroke="#ee6a2a" stroke-width=".9"/></svg><svg class="ic" style="left:24.3px;top:42.0px" width="12" height="12" viewBox="0 0 12 12"><path d="M1 3.5h3.5l1 1.2h4.500v6.300h-9z" fill="#eeb44a" stroke="#b98622" stroke-width=".8"/><path d="M1 11l1.8-4.6h8.8L10 11z" fill="#fbe39a" stroke="#b98622" stroke-width=".8"/><path d="M7.5 2.5c1.5-1.2 3-.8 3.5.6" stroke="#555" fill="none" stroke-width=".8"/></svg><svg class="ic" style="left:41.0px;top:42.0px" width="12" height="12" viewBox="0 0 12 12"><rect x="1.3" y="1.3" width="9.6" height="9.6" fill="#3044c0" stroke="#1c2a80" stroke-width=".8"/><rect x="3.2" y="1.6" width="5.6" height="3.6" fill="#e8ecf8"/><rect x="3.4" y="7.2" width="5.2" height="3.6" fill="#c8cbd8"/><rect x="4.2" y="7.8" width="1.5" height="2.6" fill="#222a70"/></svg><svg class="ic" style="left:57.8px;top:42.0px" width="12" height="12" viewBox="0 0 12 12"><path d="M4 .8h4.6l1.200 4H3z" fill="#dfeaf8" stroke="#8aa0c0" stroke-width=".7"/><rect x="1" y="4.6" width="10" height="4.6" rx="1.2" fill="#c9ccd2" stroke="#777c86" stroke-width=".8"/><path d="M2.6 8.2h6.8l.8 2.8H1.8z" fill="#eceef2" stroke="#888d96" stroke-width=".7"/></svg><i class="sep" style="left:75.0px"></i><svg class="ic" style="left:81.3px;top:42.0px" width="12" height="12" viewBox="0 0 12 12"><path d="M3.2 1.2v8.6l2.1-1.9 1.5 3.3 1.4-.6-1.5-3.2h2.9z" fill="#fff" stroke="#111" stroke-width=".9" stroke-linejoin="round"/></svg><i class="sep" style="left:97.4px"></i><svg class="ic" style="left:102.6px;top:42.0px" width="12" height="12" viewBox="0 0 12 12"><path d="M6.6 6.6l4 4" stroke="#d8963a" stroke-width="2.2" stroke-linecap="round"/><circle cx="4.7" cy="4.7" r="3.3" fill="#dff0fb" stroke="#3c78c8" stroke-width="1.2"/><path d="M3 4.7h3.4M4.7 3v3.4" stroke="#2a60b0" stroke-width="1"/></svg><svg class="ic" style="left:119.6px;top:42.0px" width="12" height="12" viewBox="0 0 12 12"><path d="M6.6 6.6l4 4" stroke="#d8963a" stroke-width="2.2" stroke-linecap="round"/><circle cx="4.7" cy="4.7" r="3.3" fill="#dff0fb" stroke="#3c78c8" stroke-width="1.2"/><path d="M3 4.7h3.4" stroke="#2a60b0" stroke-width="1"/></svg><svg class="ic" style="left:136.3px;top:42.0px" width="13" height="12" viewBox="0 0 13 12"><path d="M3.2 6.2V3.2c0-.9 1.2-.9 1.2 0V1.9c0-.9 1.3-.9 1.3 0v.2c0-.9 1.3-.9 1.3 0v.8c0-.9 1.3-.8 1.3.1v2l1-1.2c.6-.7 1.5 0 1 .8L8.8 8.2c-.5 1.5-1.2 2.6-2.6 2.6H5.4c-1.3 0-2-.9-2.6-2.1L1.6 6.5c-.4-.9.7-1.4 1.2-.7z" fill="#fdf1dc" stroke="#3a6aa8" stroke-width=".9" stroke-linejoin="round"/><path d="M4.400 3.200v2.800M5.700 2.200v3.600M7 2.800v3" stroke="#3a6aa8" stroke-width=".6"/></svg><svg class="ic" style="left:152.4px;top:42.0px" width="12" height="12" viewBox="0 0 12 12"><path d="M2.6 3.2A4.6 4.6 0 1 1 1.8 7.6" fill="none" stroke="#34507c" stroke-width="1.5"/><path d="M.6 1.4l3.6.4-1.6 3z" fill="#34507c"/><circle cx="6.400" cy="6.600" r="1.900" fill="#eef2f8" stroke="#34507c" stroke-width=".9"/></svg><svg class="ic" style="left:171.0px;top:42.0px" width="12" height="12" viewBox="0 0 12 12"><rect x="5" y=".8" width="6.4" height="6" fill="#f0dca0" stroke="#a08440" stroke-width=".8"/><path d="M1 1.5c.6 5.5 3.5 8.4 8.5 9.5" stroke="#2a50c8" fill="none" stroke-width=".9"/><path d="M3.6 5.2v5M1.2 7.7h5" stroke="#111" stroke-width="1.3"/></svg><svg class="ic" style="left:188.6px;top:42.0px" width="12" height="12" viewBox="0 0 12 12"><path d="M10.8.8L5.6 6.4l1 1z" fill="#5a7cc0" stroke="#34507c" stroke-width=".6"/><path d="M5.6 6.2c-1.6 0-2.6 1-2.9 2.6-.2.9-.8 1.4-1.7 1.6 2.4.9 5.2.1 5.6-3.2z" fill="#444" /><rect x="7.6" y="7.6" width="3.2" height="3.2" fill="#e8202a"/></svg><i class="dd" style="left:204px"></i><i class="sep" style="left:213.0px"></i><svg class="ic" style="left:218.0px;top:42.0px" width="12" height="12" viewBox="0 0 12 12"><rect x="2.6" y="1" width="8.6" height="6.4" fill="#e9eef7" stroke="#3c5e98" stroke-width=".9"/><rect x=".8" y="3" width="8.6" height="6.4" fill="#dbe4f2" stroke="#3c5e98" stroke-width=".9"/><path d="M3 10h2.2M6.6 10h2.4" stroke="#3c5e98" stroke-width="1.8" stroke-linecap="round"/><path d="M4.6 10h2.6" stroke="#7c92b8" stroke-width="1"/></svg><i class="sep" style="left:235.7px"></i><svg class="ic" style="left:240.8px;top:42.0px" width="12" height="12" viewBox="0 0 12 12"><defs><linearGradient id="cbg" x1="0" y1="0" x2="0" y2="1"><stop offset="0" stop-color="#5d9bea"/><stop offset=".5" stop-color="#c9d6e8"/><stop offset="1" stop-color="#fbd384"/></linearGradient></defs><rect x="2.6" y=".8" width="6.8" height="10.4" rx=".8" fill="url(#cbg)" stroke="#3a4c78" stroke-width="1"/></svg><svg class="ic" style="left:257.0px;top:42.0px" width="12" height="12" viewBox="0 0 12 12"><rect x=".9" y=".9" width="10.2" height="10.2" rx=".8" fill="#f4f6fb" stroke="#3a4c78" stroke-width="1"/><rect x="2.4" y="2.6" width="2.6" height="2.2" fill="#e8352a"/><rect x="2.4" y="6.8" width="2.6" height="2.2" fill="#2a55d8"/><path d="M6 3.7h3.6M6 7.9h3.6" stroke="#445" stroke-width="1.1"/></svg><i class="sep" style="left:274.5px"></i><svg class="ic" style="left:280.0px;top:42.0px" width="12" height="12" viewBox="0 0 12 12"><rect x="2.2" y="2.6" width="7" height="6.6" rx=".8" fill="#a9a9a9" stroke="#8c8c8c" stroke-width=".8"/></svg><svg class="ic" style="left:297.0px;top:42.0px" width="12" height="12" viewBox="0 0 12 12"><rect x=".8" y="1.4" width="10.6" height="9.2" fill="#dfe6f3" stroke="#2c3e74" stroke-width="1.2"/><rect x="3" y="3.4" width="6.2" height="5.2" fill="#f6f8fc" stroke="#2c3e74" stroke-width=".7"/></svg></div>
<div class="cv"><div class="pt" style="left:0;width:381.6px;top:0px">(b)DCT变换系数</div><svg class="img" style="left:66.6px;top:14.3px" width="246" height="233.5" preserveAspectRatio="none" viewBox="0 0 246 232">
<defs>
<filter id="nz" x="0" y="0" width="100%" height="100%"><feTurbulence type="fractalNoise" baseFrequency="0.95" numOctaves="2" seed="11" result="t"/><feColorMatrix type="matrix" values="0 0 0 0 1  0 0 0 0 1  0 0 0 0 1  3.2 3.2 0 0 -3.25"/></filter>
<filter id="nz2" x="0" y="0" width="100%" height="100%"><feTurbulence type="fractalNoise" baseFrequency="0.9" numOctaves="2" seed="5" result="t"/><feColorMatrix type="matrix" values="0 0 0 0 1  0 0 0 0 1  0 0 0 0 1  3 3 0 0 -2.6"/></filter>
<radialGradient id="rg" gradientUnits="userSpaceOnUse" cx="0" cy="0" r="130"><stop offset="0" stop-color="#fff" stop-opacity=".9"/><stop offset=".28" stop-color="#fff" stop-opacity=".6"/><stop offset=".55" stop-color="#fff" stop-opacity=".2"/><stop offset="1" stop-color="#fff" stop-opacity="0"/></radialGradient>
<mask id="mk"><rect width="246" height="232" fill="url(#rg)"/></mask>
</defs>
<rect width="246" height="232" fill="#0b0b0b"/>
<rect width="246" height="232" filter="url(#nz)" opacity=".17"/>
<g mask="url(#mk)"><rect width="246" height="232" filter="url(#nz2)"/></g>
</svg></div>
</div></div>
<div class="fw f3" style="left:157px;top:135.5px">
<div class="fwt"><svg class="mlogo" width="12" height="12" viewBox="0 0 12 12" preserveAspectRatio="none"><rect x=".4" y=".4" width="11.2" height="11.2" fill="#f6f6f6" stroke="#9aa" stroke-width=".6"/><path d="M1.2 7.4l2.6-1.6 1.4 1.2-1.8 1.9z" fill="#3d6fc0"/><path d="M3.8 5.8c1.4-1.3 2.2-3.4 3.4-4.4l1.2 5.4-3.2 2.2z" fill="#d8442a"/><path d="M7.2 1.4c1.2 1.6 2.2 5.6 3.6 7.4-1.4-.6-2-.2-2.8 1.4-.8-1-1.6-2-2.8-1.6z" fill="#f29a2e"/></svg><b>Figure 3</b></div>
<div class="wb"><i class="b1"><u></u></i><i class="b2"><u></u></i><i class="b3">✕</i></div>
<div class="fin">
<div class="mb"><span style="left:6.199999999999999px">文件(F)</span><span style="left:46.3px">编辑(E)</span><span style="left:86.6px">查看(V)</span><span style="left:127.19999999999999px">插入(I)</span><span style="left:166.4px">工具(T)</span><span style="left:207px">桌面(D)</span><span style="left:248.2px">窗口(W)</span><span style="left:293px">帮助(H)</span><em>➘</em></div>
<div class="tb"><svg class="ic" style="left:8.0px;top:42.0px" width="12" height="12" viewBox="0 0 12 12"><path d="M1.8 1.3h6l3 3v7h-9z" fill="#f4f8fd" stroke="#4a68a4" stroke-width="1.1"/><path d="M7.8 1.300v3h3" fill="#d4e0f2" stroke="#4a68a4" stroke-width=".8"/><circle cx="1.9" cy="1.7" r="1.5" fill="#fbe3c0" stroke="#ee6a2a" stroke-width=".9"/></svg><svg class="ic" style="left:24.3px;top:42.0px" width="12" height="12" viewBox="0 0 12 12"><path d="M1 3.5h3.5l1 1.2h4.500v6.300h-9z" fill="#eeb44a" stroke="#b98622" stroke-width=".8"/><path d="M1 11l1.8-4.6h8.8L10 11z" fill="#fbe39a" stroke="#b98622" stroke-width=".8"/><path d="M7.5 2.5c1.5-1.2 3-.8 3.5.6" stroke="#555" fill="none" stroke-width=".8"/></svg><svg class="ic" style="left:41.0px;top:42.0px" width="12" height="12" viewBox="0 0 12 12"><rect x="1.3" y="1.3" width="9.6" height="9.6" fill="#3044c0" stroke="#1c2a80" stroke-width=".8"/><rect x="3.2" y="1.6" width="5.6" height="3.6" fill="#e8ecf8"/><rect x="3.4" y="7.2" width="5.2" height="3.6" fill="#c8cbd8"/><rect x="4.2" y="7.8" width="1.5" height="2.6" fill="#222a70"/></svg><svg class="ic" style="left:57.8px;top:42.0px" width="12" height="12" viewBox="0 0 12 12"><path d="M4 .8h4.6l1.200 4H3z" fill="#dfeaf8" stroke="#8aa0c0" stroke-width=".7"/><rect x="1" y="4.6" width="10" height="4.6" rx="1.2" fill="#c9ccd2" stroke="#777c86" stroke-width=".8"/><path d="M2.6 8.2h6.8l.8 2.8H1.8z" fill="#eceef2" stroke="#888d96" stroke-width=".7"/></svg><i class="sep" style="left:75.0px"></i><svg class="ic" style="left:81.3px;top:42.0px" width="12" height="12" viewBox="0 0 12 12"><path d="M3.2 1.2v8.6l2.1-1.9 1.5 3.3 1.4-.6-1.5-3.2h2.9z" fill="#fff" stroke="#111" stroke-width=".9" stroke-linejoin="round"/></svg><i class="sep" style="left:97.4px"></i><svg class="ic" style="left:102.6px;top:42.0px" width="12" height="12" viewBox="0 0 12 12"><path d="M6.6 6.6l4 4" stroke="#d8963a" stroke-width="2.2" stroke-linecap="round"/><circle cx="4.7" cy="4.7" r="3.3" fill="#dff0fb" stroke="#3c78c8" stroke-width="1.2"/><path d="M3 4.7h3.4M4.7 3v3.4" stroke="#2a60b0" stroke-width="1"/></svg><svg class="ic" style="left:119.6px;top:42.0px" width="12" height="12" viewBox="0 0 12 12"><path d="M6.6 6.6l4 4" stroke="#d8963a" stroke-width="2.2" stroke-linecap="round"/><circle cx="4.7" cy="4.7" r="3.3" fill="#dff0fb" stroke="#3c78c8" stroke-width="1.2"/><path d="M3 4.7h3.4" stroke="#2a60b0" stroke-width="1"/></svg><svg class="ic" style="left:136.3px;top:42.0px" width="13" height="12" viewBox="0 0 13 12"><path d="M3.2 6.2V3.2c0-.9 1.2-.9 1.2 0V1.9c0-.9 1.3-.9 1.3 0v.2c0-.9 1.3-.9 1.3 0v.8c0-.9 1.3-.8 1.3.1v2l1-1.2c.6-.7 1.5 0 1 .8L8.8 8.2c-.5 1.5-1.2 2.6-2.6 2.6H5.4c-1.3 0-2-.9-2.6-2.1L1.6 6.5c-.4-.9.7-1.4 1.2-.7z" fill="#fdf1dc" stroke="#3a6aa8" stroke-width=".9" stroke-linejoin="round"/><path d="M4.400 3.200v2.800M5.700 2.200v3.600M7 2.800v3" stroke="#3a6aa8" stroke-width=".6"/></svg><svg class="ic" style="left:152.4px;top:42.0px" width="12" height="12" viewBox="0 0 12 12"><path d="M2.6 3.2A4.6 4.6 0 1 1 1.8 7.6" fill="none" stroke="#34507c" stroke-width="1.5"/><path d="M.6 1.4l3.6.4-1.6 3z" fill="#34507c"/><circle cx="6.400" cy="6.600" r="1.900" fill="#eef2f8" stroke="#34507c" stroke-width=".9"/></svg><svg class="ic" style="left:171.0px;top:42.0px" width="12" height="12" viewBox="0 0 12 12"><rect x="5" y=".8" width="6.4" height="6" fill="#f0dca0" stroke="#a08440" stroke-width=".8"/><path d="M1 1.5c.6 5.5 3.5 8.4 8.5 9.5" stroke="#2a50c8" fill="none" stroke-width=".9"/><path d="M3.6 5.2v5M1.2 7.7h5" stroke="#111" stroke-width="1.3"/></svg><svg class="ic" style="left:188.6px;top:42.0px" width="12" height="12" viewBox="0 0 12 12"><path d="M10.8.8L5.6 6.4l1 1z" fill="#5a7cc0" stroke="#34507c" stroke-width=".6"/><path d="M5.6 6.2c-1.6 0-2.6 1-2.9 2.6-.2.9-.8 1.4-1.7 1.6 2.4.9 5.2.1 5.6-3.2z" fill="#444" /><rect x="7.6" y="7.6" width="3.2" height="3.2" fill="#e8202a"/></svg><i class="dd" style="left:204px"></i><i class="sep" style="left:213.0px"></i><svg class="ic" style="left:218.0px;top:42.0px" width="12" height="12" viewBox="0 0 12 12"><rect x="2.6" y="1" width="8.6" height="6.4" fill="#e9eef7" stroke="#3c5e98" stroke-width=".9"/><rect x=".8" y="3" width="8.6" height="6.4" fill="#dbe4f2" stroke="#3c5e98" stroke-width=".9"/><path d="M3 10h2.2M6.6 10h2.4" stroke="#3c5e98" stroke-width="1.8" stroke-linecap="round"/><path d="M4.6 10h2.6" stroke="#7c92b8" stroke-width="1"/></svg><i class="sep" style="left:235.7px"></i><svg class="ic" style="left:240.8px;top:42.0px" width="12" height="12" viewBox="0 0 12 12"><defs><linearGradient id="cbg" x1="0" y1="0" x2="0" y2="1"><stop offset="0" stop-color="#5d9bea"/><stop offset=".5" stop-color="#c9d6e8"/><stop offset="1" stop-color="#fbd384"/></linearGradient></defs><rect x="2.6" y=".8" width="6.8" height="10.4" rx=".8" fill="url(#cbg)" stroke="#3a4c78" stroke-width="1"/></svg><svg class="ic" style="left:257.0px;top:42.0px" width="12" height="12" viewBox="0 0 12 12"><rect x=".9" y=".9" width="10.2" height="10.2" rx=".8" fill="#f4f6fb" stroke="#3a4c78" stroke-width="1"/><rect x="2.4" y="2.6" width="2.6" height="2.2" fill="#e8352a"/><rect x="2.4" y="6.8" width="2.6" height="2.2" fill="#2a55d8"/><path d="M6 3.7h3.6M6 7.9h3.6" stroke="#445" stroke-width="1.1"/></svg><i class="sep" style="left:274.5px"></i><svg class="ic" style="left:280.0px;top:42.0px" width="12" height="12" viewBox="0 0 12 12"><rect x="2.2" y="2.6" width="7" height="6.6" rx=".8" fill="#a9a9a9" stroke="#8c8c8c" stroke-width=".8"/></svg><svg class="ic" style="left:297.0px;top:42.0px" width="12" height="12" viewBox="0 0 12 12"><rect x=".8" y="1.4" width="10.6" height="9.2" fill="#dfe6f3" stroke="#2c3e74" stroke-width="1.2"/><rect x="3" y="3.4" width="6.2" height="5.2" fill="#f6f8fc" stroke="#2c3e74" stroke-width=".7"/></svg></div>
<div class="cv"><div class="pt" style="left:133px;width:128px;top:8px;text-align:left;white-space:nowrap">(c)DCT变换系数(立体视图)</div><svg class="img" style="left:0;top:0" width="380" height="277" viewBox="0 0 380 277" font-family='"Liberation Sans",sans-serif' font-size="9.7" fill="#404040"><polygon points="50.3,65.0 216.2,22.2 343.4,78.0 343.4,202.2 177.5,245.0 50.3,189.2" fill="#fff"/><g fill="none" stroke="#dedede" stroke-width=".9"><polyline points="50.3,189.2 216.2,146.5 343.4,202.2"/><polyline points="50.3,164.4 216.2,121.6 343.4,177.4"/><polyline points="50.3,139.6 216.2,96.8 343.4,152.6"/><polyline points="50.3,114.7 216.2,71.9 343.4,127.7"/><polyline points="50.3,89.9 216.2,47.1 343.4,102.9"/><polyline points="50.3,65.0 216.2,22.2 343.4,78.0"/><polyline points="177.5,245.0 50.3,189.2 50.3,65.0"/><polyline points="177.5,245.0 343.4,202.2 343.4,78.0"/><polyline points="232.8,230.8 105.6,175.0 105.6,50.8"/><polyline points="135.1,226.4 301.0,183.7 301.0,59.4"/><polyline points="288.1,216.5 160.9,160.8 160.9,36.5"/><polyline points="92.7,207.8 258.6,165.1 258.6,40.8"/><polyline points="343.4,202.2 216.2,146.5 216.2,22.2"/><polyline points="50.3,189.2 216.2,146.5 216.2,22.2"/></g><g fill="none" stroke="#404040" stroke-width=".9"><polyline points="50.3,65.0 50.3,189.2 177.5,245.0 343.4,202.2"/><path d="M50.3 189.2l-3.6 -1.4"/><path d="M50.3 164.4l-3.6 -1.4"/><path d="M50.3 139.6l-3.6 -1.4"/><path d="M50.3 114.7l-3.6 -1.4"/><path d="M50.3 89.9l-3.6 -1.4"/><path d="M50.3 65.0l-3.6 -1.4"/><path d="M177.5 245.0l-3.4 1.4"/><path d="M177.5 245.0l3.4 1.7"/><path d="M135.1 226.4l-3.4 1.4"/><path d="M232.8 230.8l3.4 1.7"/><path d="M92.7 207.8l-3.4 1.4"/><path d="M288.1 216.5l3.4 1.7"/><path d="M50.3 189.2l-3.4 1.4"/><path d="M343.4 202.2l3.4 1.7"/></g><polygon points="69.0,172.6 210.5,136.1 319.1,183.7 223.5,208.3 221.2,209.0 219.9,209.3 218.6,209.6 217.3,210.0 216.0,210.2 214.7,210.6 213.4,211.0 212.1,211.3 210.8,211.5 209.5,212.0 208.2,212.4 206.9,212.6 205.6,213.1 204.3,213.4 203.0,213.5 201.7,214.1 200.4,214.4 199.1,214.9 197.8,215.1 196.5,215.7 195.2,215.7 193.9,216.1 192.6,216.8 191.3,216.8 190.0,217.3 188.7,218.2 187.4,218.8 186.1,219.4 184.8,220.6 183.5,221.6 182.7,224.1 181.7,227.3 180.7,225.5 179.7,230.3 178.7,226.1 177.0,225.1 175.0,223.1 169.5,218.3 157.5,212.0 137.5,202.7" fill="#4353ec"/><path d="M177.5 234.2V144.8" stroke="#dcb35c" stroke-width="1.3"/><path d="M178.5 220.1V145.5" stroke="#9a9ad6" stroke-width=".5"/><text x="42.1" y="191.0" text-anchor="end">-100</text><text x="42.1" y="166.2" text-anchor="end">0</text><text x="42.1" y="141.3" text-anchor="end">100</text><text x="42.1" y="116.5" text-anchor="end">200</text><text x="42.1" y="91.6" text-anchor="end">300</text><text x="42.1" y="66.8" text-anchor="end">400</text><text x="168.3" y="257.6" text-anchor="end">0</text><text x="184.7" y="258.9" text-anchor="start">0</text><text x="125.9" y="239.0" text-anchor="end">200</text><text x="240.0" y="244.6" text-anchor="start">200</text><text x="83.5" y="220.4" text-anchor="end">400</text><text x="295.3" y="230.4" text-anchor="start">400</text><text x="41.1" y="201.8" text-anchor="end">600</text><text x="350.6" y="216.1" text-anchor="start">600</text></svg></div>
</div></div>
<div id="wm">
<svg style="position:absolute;left:-77px;top:0" width="72" height="52" viewBox="0 0 72 52"><g fill="#1468b8"><path d="M1 13.2L35 1l35 12.4-7.4 3.3-0 0L37.5 10.2c-1.6-.5-3 .2-3.4 1.2-.3 1 .2 2 1.6 2.6L55 20.6 35.4 29.6z"/><path d="M13 21.2V33.5c0 4.2 9.5 7.6 22 7.6s21.5-3.4 21.5-7.6V22.6L35.4 32.4z"/><path d="M58.2 18.6c1.2 1.4 2 4 2.2 8.2-1 .8-1.4 1.800-1.200 2.800.2 1 .6 1.600 1.400 2.000-.4 5 1.200 10.800 4.600 17l5.600-2.600c-4-5.200-6.200-10.200-6.600-14.600.8-.6 1.200-1.400 1-2.600-.2-1-.8-1.800-1.800-2.200-.2-4.600-1-7.800-2.600-9.600z"/></g></svg>
<div class="cn">必过源码</div><div class="en">Biguo100.com</div></div>

</body></html>
